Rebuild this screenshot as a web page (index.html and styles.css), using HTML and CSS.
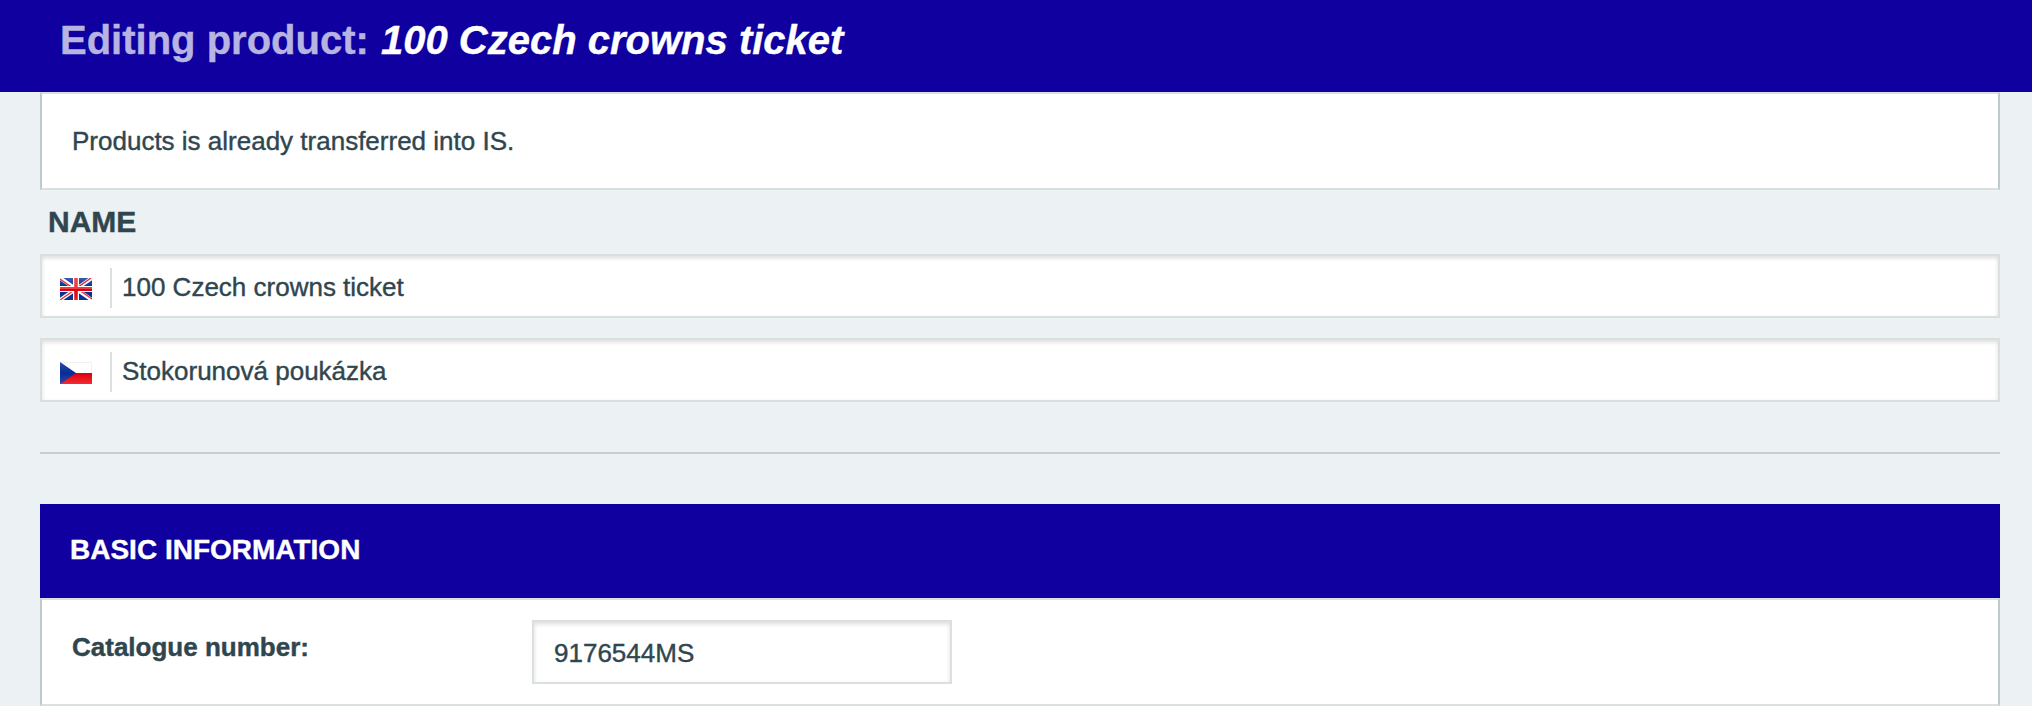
FILE: index.html
```html
<!DOCTYPE html>
<html lang="en">
<head>
<meta charset="utf-8">
<title>Editing product: 100 Czech crowns ticket</title>
<link rel="stylesheet" href="styles.css">
</head>
<body>
<header class="header">
  <h1 class="header__title"><span class="header__label">Editing product: </span><em class="header__name">100 Czech crowns ticket</em></h1>
</header>
<main class="content">
  <section class="notice"><span class="notice__text">Products is already transferred into IS.</span></section>
  <section class="names">
    <h2 class="names__title">NAME</h2>
    <div class="field">
      <svg class="field__flag" viewBox="0 0 32 22">
        <defs>
          <linearGradient id="navy" x1="0" y1="0" x2="0" y2="1"><stop offset="0" stop-color="#3c5fb2"/><stop offset=".4" stop-color="#052d8c"/><stop offset="1" stop-color="#0a3596"/></linearGradient>
          <linearGradient id="cross" gradientUnits="userSpaceOnUse" x1="0" y1="0" x2="0" y2="22"><stop offset="0" stop-color="#f0434b"/><stop offset=".48" stop-color="#ed3941"/><stop offset=".52" stop-color="#d8000f"/><stop offset="1" stop-color="#ed2028"/></linearGradient>
        </defs>
        <path fill="url(#navy)" d="M0 0h32v22H0z"/>
        <path stroke="#fff" stroke-width="3.8" d="M0 0l32 22M32 0L0 22"/>
        <path stroke="#e52a35" stroke-width="1.3" d="M0 1l13 9M19 12l13 9M31 0L19 8.400M13 13L0 22"/>
        <path fill="#fff" d="M13 0h6v22h-6zM0 8h32v6H0z"/>
        <path fill="url(#cross)" d="M14.200 0h3.600v9H32v4H17.800V22h-3.600v-9H0V9h14.200z"/>
      </svg>
      <span class="field__value">100 Czech crowns ticket</span>
    </div>
    <div class="field">
      <svg class="field__flag" viewBox="0 0 32 22">
        <defs>
          <linearGradient id="red" x1="0" y1="0" x2="0" y2="1"><stop offset="0" stop-color="#d9000c"/><stop offset="1" stop-color="#f52a31"/></linearGradient>
          <linearGradient id="blue" x1="0" y1="0" x2="0" y2="1"><stop offset="0" stop-color="#2a4dac"/><stop offset=".5" stop-color="#082c91"/><stop offset="1" stop-color="#2448aa"/></linearGradient>
        </defs>
        <path fill="#fff" stroke="#f0f0f0" d="M.5.5h31v21H.5z"/>
        <path fill="url(#red)" d="M0 11h32v11H0z"/>
        <path fill="url(#blue)" d="M0 0l16 11L0 22z"/>
      </svg>
      <span class="field__value">Stokorunová poukázka</span>
    </div>
  </section>
  <hr class="divider">
  <section class="panel">
    <h2 class="panel__title">BASIC INFORMATION</h2>
    <div class="panel__body">
      <span class="panel__label">Catalogue number:</span>
      <div class="input">9176544MS</div>
    </div>
  </section>
</main>
</body>
</html>
```
FILE: styles.css
```css
* { box-sizing: border-box; }
body {
  margin: 0;
  height: 706px;
  overflow: hidden;
  background: #ecf1f4;
  color: #30464f;
  font: 26px/30px "Liberation Sans", Arial, sans-serif;
  -webkit-text-stroke: .4px currentColor;
}
h1, h2 { margin: 0; }
.header {
  height: 92px;
  padding: 16px 60px 0;
  background: #0f009f;
  color: #fff;
}
.header__title { font-size: 40px; line-height: 48px; white-space: pre; }
.header__label { color: #b7b3e2; }
.header__name { margin-left: 1px; }
.content { padding: 0 32px 0 40px; }
.notice {
  height: 98px;
  padding: 32px 30px 0;
  border: 2px solid;
  border-color: #dadfdf #bfcacf;
  background: #fff;
}
.names { display: flex; flex-direction: column; gap: 20px; padding-top: 15px; }
.names__title { padding-left: 8px; margin-bottom: -5px; font-size: 30px; line-height: 34px; }
.field {
  display: flex;
  height: 64px;
  padding-left: 18px;
  border: 2px solid #dadfdf;
  background: #fff;
  box-shadow: inset 0 2px 4px rgba(0, 0, 0, .14);
}
.field__flag { width: 32px; height: 22px; margin: 22px 18px 0 0; }
.field__value { height: 40px; margin-top: 12px; padding-left: 10px; border-left: 2px solid #dadfdf; line-height: 38px; }
.divider { height: 2px; margin: 50px 0; border: 0; background: #c8cdcf; }
.panel__title { height: 94px; padding-left: 30px; background: #0f009f; color: #fff; font-size: 28px; line-height: 92px; }
.panel__body {
  display: flex;
  height: 108px;
  padding: 20px 30px;
  border: 2px solid;
  border-color: #dadfdf #bfcacf;
  background: #fff;
}
.panel__label { width: 460px; padding-top: 12px; font-weight: bold; }
.input {
  width: 420px;
  height: 64px;
  padding-left: 20px;
  border: 2px solid #dadfdf;
  background: #fff;
  box-shadow: inset 0 2px 4px rgba(0, 0, 0, .14);
  line-height: 62px;
}
```
